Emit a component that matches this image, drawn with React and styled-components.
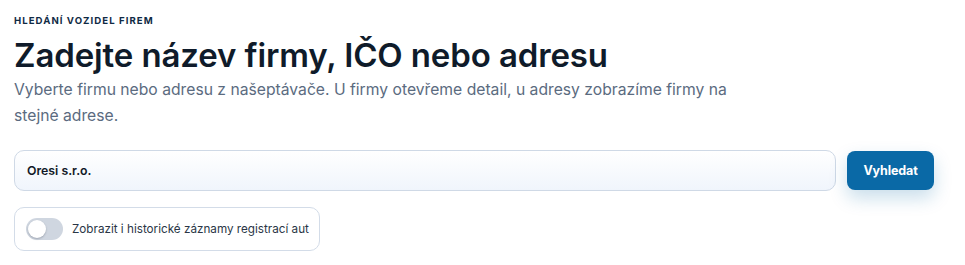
import React, { useState } from 'react';
import styled, { createGlobalStyle } from 'styled-components';

const GlobalStyle = createGlobalStyle`
    * { box-sizing: border-box; }
    body {
        margin: 0;
        background: #ffffff;
        font-family: Inter, "Noto Sans", sans-serif;
    }
`;

const Page = styled.section`
    padding: 15px 31px 0 14px;
`;

const Eyebrow = styled.div`
    font-size: 9.6px;
    font-weight: 700;
    letter-spacing: 0.11em;
    text-transform: uppercase;
    color: #0f2a44;
    line-height: 12px;
`;

const Title = styled.h1`
    margin: 9px 0 0 0;
    font-size: 33px;
    font-weight: 600;
    letter-spacing: -0.12px;
    line-height: 38px;
    color: #0f1b2a;
`;

const Lead = styled.p`
    margin: 3px 0 0 0;
    max-width: 730px;
    font-size: 15.7px;
    line-height: 26px;
    color: #5b6b80;
`;

const SearchRow = styled.form`
    display: flex;
    align-items: center;
    gap: 11px;
    margin-top: 21px;
`;

const SearchInput = styled.input`
    flex: 1;
    height: 41px;
    padding: 0 12px;
    border: 1px solid #cfd9e6;
    border-radius: 10px;
    background: linear-gradient(180deg, #ffffff 0%, #f0f5fc 100%);
    font-family: inherit;
    font-size: 12.3px;
    font-weight: 600;
    color: #111827;
    outline: none;
`;

const SearchButton = styled.button`
    width: 87px;
    height: 39px;
    border: none;
    border-radius: 8px;
    background: #0a69a6;
    color: #ffffff;
    font-family: inherit;
    font-size: 12.5px;
    font-weight: 700;
    letter-spacing: -0.01em;
    box-shadow: 0 8px 18px rgba(10, 105, 166, 0.22);
    cursor: pointer;
`;

const OptionBox = styled.label`
    display: inline-flex;
    align-items: center;
    gap: 9px;
    margin-top: 16px;
    height: 44px;
    padding: 0 10px 0 11px;
    border: 1px solid #d3dce8;
    border-radius: 10px;
    background: #ffffff;
    cursor: pointer;
`;

const Track = styled.span`
    position: relative;
    display: inline-block;
    width: 37px;
    height: 22px;
    border-radius: 11px;
    background: ${p => (p.$on ? '#0a69a6' : '#cfd6e0')};
    transition: background 0.15s;
`;

const Knob = styled.span`
    position: absolute;
    top: 2px;
    left: ${p => (p.$on ? '17px' : '2px')};
    width: 18px;
    height: 18px;
    border-radius: 50%;
    background: #ffffff;
    box-shadow: 0 1px 2px rgba(15, 23, 42, 0.25);
    transition: left 0.15s;
`;

const OptionText = styled.span`
    font-size: 11.7px;
    color: #2a3646;
`;

export default function App() {
    const [query, setQuery] = useState('Oresi s.r.o.');
    const [history, setHistory] = useState(false);

    return (
        <Page>
            <GlobalStyle />
            <Eyebrow>Hledání vozidel firem</Eyebrow>
            <Title>Zadejte název firmy, IČO nebo adresu</Title>
            <Lead>
                Vyberte firmu nebo adresu z našeptávače. U firmy otevřeme detail, u adresy zobrazíme firmy na stejné adrese.
            </Lead>
            <SearchRow onSubmit={e => e.preventDefault()}>
                <SearchInput value={query} onChange={e => setQuery(e.target.value)} />
                <SearchButton type="submit">Vyhledat</SearchButton>
            </SearchRow>
            <OptionBox onClick={() => setHistory(!history)}>
                <Track $on={history}>
                    <Knob $on={history} />
                </Track>
                <OptionText>Zobrazit i historické záznamy registrací aut</OptionText>
            </OptionBox>
        </Page>
    );
}
